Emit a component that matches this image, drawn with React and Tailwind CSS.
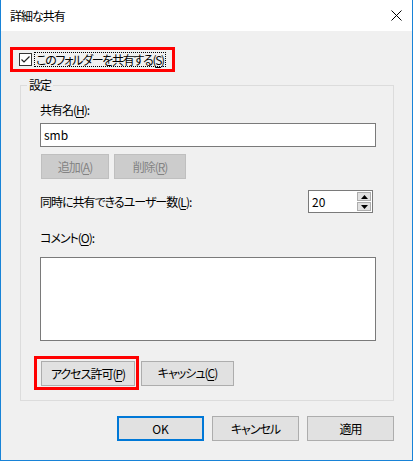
import React from 'react';

const font = "font-['Noto_Sans_CJK_JP','Noto_Sans',sans-serif] [font-feature-settings:'palt'] tracking-[-1px]";

const Btn = ({ children, className = '', disabled = false, primary = false }) => (
    <button
        className={
            'h-[25px] flex items-center justify-center text-[12px] leading-none whitespace-nowrap ' +
            (disabled
                ? 'bg-[#cccccc] border border-[#bfbfbf] text-[#838383] '
                : primary
                ? 'bg-[#e1e1e1] border-2 border-[#0078d7] text-black '
                : 'bg-[#e1e1e1] border border-[#adadad] text-black ') +
            className
        }
    >
        {children}
    </button>
);

const U = ({ children }) => <span className="underline underline-offset-2">{children}</span>;

export default function App() {
    return (
        <div className={`w-[413px] h-[461px] flex flex-col border-x border-b border-[#1883d7] bg-[#f0f0f0] text-black ${font}`}>
            {/* Title bar */}
            <div className="h-[31px] bg-white flex items-center justify-between pl-[9px] pr-[10px] shrink-0">
                <span className="text-[12px]">詳細な共有</span>
                <svg width="11" height="11" viewBox="0 0 11 11">
                    <path d="M0.5 0.5 L10.5 10.5 M10.5 0.5 L0.5 10.5" stroke="#000" strokeWidth="1" />
                </svg>
            </div>

            <div className="flex-1 flex flex-col">
                {/* Share checkbox, highlighted */}
                <div className="mt-[16px] ml-[9px] w-[165px] h-[25px] border-[3px] border-[#ff0000] flex items-center pl-[6px]">
                    <div className="w-[13px] h-[13px] shrink-0 bg-white border border-[#333333] flex items-center justify-center">
                        <svg width="11" height="11" viewBox="0 0 11 11">
                            <path d="M1.5 5.5 L4 8 L9.5 2.5" stroke="#222" strokeWidth="1.2" fill="none" />
                        </svg>
                    </div>
                    <span className="ml-[2px] border border-dotted border-black px-[1px] text-[12px] leading-[13px] whitespace-nowrap tracking-[-1.3px]">
                        このフォルダーを共有する(<U>S</U>)
                    </span>
                </div>

                {/* Settings group */}
                <fieldset className="mt-[5px] ml-[19px] w-[374px] h-[324px] border border-[#dcdcdc] pb-[15px]">
                    <legend className="ml-[6px] px-[2px] text-[12px] leading-[16px]">設定</legend>

                    <div className="flex flex-col pl-[19px] pr-[16px]">
                        <div className="mt-[9px] text-[12px] leading-[16px]">
                            共有名(<U>H</U>):
                        </div>
                        <div className="mt-[5px] h-[24px] w-[336px] bg-white border border-[#7a7a7a] flex items-center px-[3px] text-[12px] tracking-normal">
                            smb
                        </div>
                        <div className="mt-[7px] flex gap-[5px] pl-[1px]">
                            <Btn disabled className="w-[68px]">追加(<U>A</U>)</Btn>
                            <Btn disabled className="w-[72px]">削除(<U>R</U>)</Btn>
                        </div>

                        <div className="mt-[11px] flex items-center justify-between pr-[4px]">
                            <span className="text-[12px] leading-[16px]">
                                同時に共有できるユーザー数(<U>L</U>):
                            </span>
                            <div className="flex h-[23px]">
                                <div className="w-[48px] bg-white border border-[#7a7a7a] border-r-0 flex items-center pl-[3px] text-[12px] tracking-normal">
                                    20
                                </div>
                                <div className="w-[17px] flex flex-col border border-[#7a7a7a] border-l-0 bg-white p-[1px] gap-[1px]">
                                    <div className="flex-1 bg-[#e1e1e1] border border-[#adadad] flex items-center justify-center">
                                        <svg width="7" height="4" viewBox="0 0 7 4"><path d="M3.5 0 L7 4 L0 4 Z" fill="#000" /></svg>
                                    </div>
                                    <div className="flex-1 bg-[#e1e1e1] border border-[#adadad] flex items-center justify-center">
                                        <svg width="7" height="4" viewBox="0 0 7 4"><path d="M0 0 L7 0 L3.5 4 Z" fill="#000" /></svg>
                                    </div>
                                </div>
                            </div>
                        </div>

                        <div className="mt-[17px] text-[12px] leading-[16px]">
                            コメント(<U>O</U>):
                        </div>
                        <div className="mt-[11px] h-[84px] w-[336px] bg-white border border-[#7a7a7a]"></div>

                        <div className="mt-[15px] flex items-center gap-[2px] -ml-[6px]">
                            <div className="border-[3px] border-[#ff0000] pl-[4px] pr-[1px] pt-[2px] pb-[1px]">
                                <Btn className="w-[94px]">アクセス許可(<U>P</U>)</Btn>
                            </div>
                            <Btn className="w-[93px]">キャッシュ(<U>C</U>)</Btn>
                        </div>
                    </div>
                </fieldset>

                {/* Dialog buttons */}
                <div className="mt-[15px] flex justify-end gap-[8px] pr-[18px]">
                    <Btn primary className="w-[87px] h-[24px] tracking-normal">OK</Btn>
                    <Btn className="w-[87px] h-[24px]">キャンセル</Btn>
                    <Btn className="w-[87px] h-[24px]">適用</Btn>
                </div>
            </div>
        </div>
    );
}
